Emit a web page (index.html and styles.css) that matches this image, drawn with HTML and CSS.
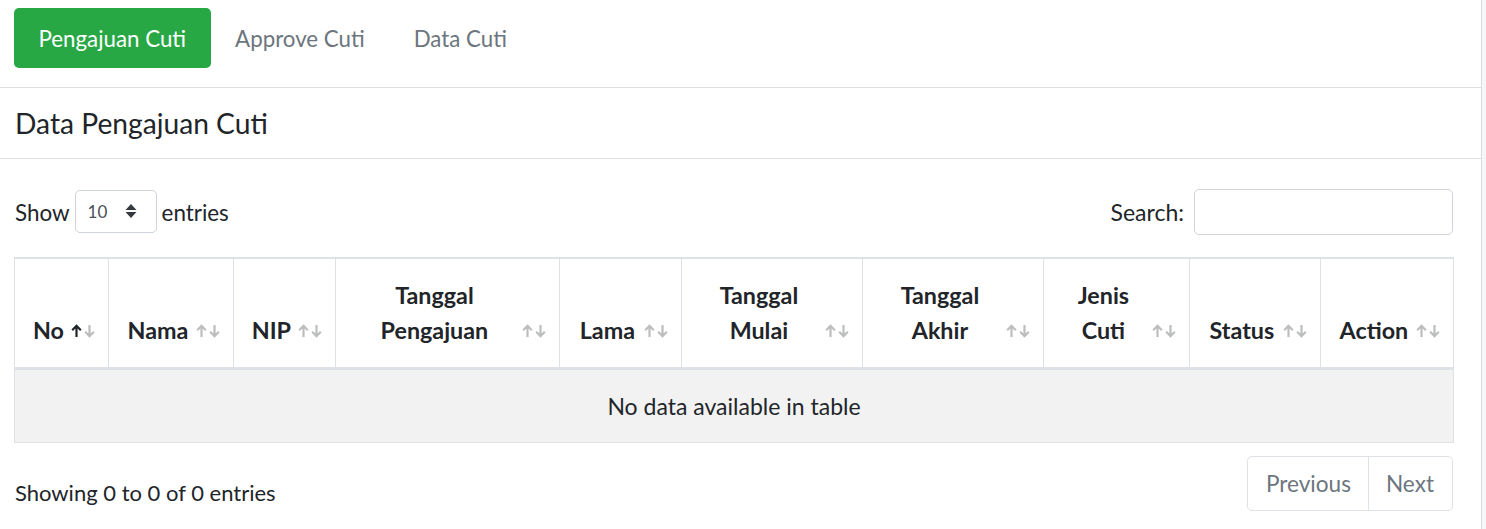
FILE: index.html
```html
<!DOCTYPE html>
<html lang="id">
<head>
<meta charset="utf-8">
<title>Data Pengajuan Cuti</title>
<link rel="stylesheet" href="styles.css">
</head>
<body>
<div class="card">
  <div class="card-header nav-header">
    <ul class="nav">
      <li><a class="pill active">Pengajuan Cuti</a></li>
      <li><a class="pill">Approve Cuti</a></li>
      <li><a class="pill">Data Cuti</a></li>
    </ul>
  </div>
  <div class="card-header title-header">
    <h3 class="card-title">Data Pengajuan Cuti</h3>
  </div>
  <div class="card-body">
    <div class="dt-top">
      <label class="length">Show <span class="select"><span class="select-val">10</span><svg class="caret" width="12" height="16" viewBox="0 0 12 16"><path d="M6 1 L11.5 7 H0.5 Z M6 15 L11.5 9 H0.5 Z" fill="#343a40"/></svg></span> entries</label>
      <label class="search">Search: <span class="input"></span></label>
    </div>
    <table class="dt">
      <colgroup>
        <col class="w-no"><col class="w-nama"><col class="w-nip"><col class="w-tp"><col class="w-lama"><col class="w-tm"><col class="w-ta"><col class="w-jc"><col class="w-st"><col class="w-ac">
      </colgroup>
      <thead>
        <tr>
          <th class="asc">No<svg class="sort-ic" width="25" height="14" viewBox="0 0 25 14"><path class="up" d="M5.5 13 V2 M1.2 6.2 L5.5 1.8 L9.8 6.2"/><path class="down" d="M18.5 1 V12 M14.2 7.8 L18.5 12.2 L22.8 7.8"/></svg></th>
          <th>Nama<svg class="sort-ic" width="25" height="14" viewBox="0 0 25 14"><path class="up" d="M5.5 13 V2 M1.2 6.2 L5.5 1.8 L9.8 6.2"/><path class="down" d="M18.5 1 V12 M14.2 7.8 L18.5 12.2 L22.8 7.8"/></svg></th>
          <th>NIP<svg class="sort-ic" width="25" height="14" viewBox="0 0 25 14"><path class="up" d="M5.5 13 V2 M1.2 6.2 L5.5 1.8 L9.8 6.2"/><path class="down" d="M18.5 1 V12 M14.2 7.8 L18.5 12.2 L22.8 7.8"/></svg></th>
          <th>Tanggal<br>Pengajuan<svg class="sort-ic" width="25" height="14" viewBox="0 0 25 14"><path class="up" d="M5.5 13 V2 M1.2 6.2 L5.5 1.8 L9.8 6.2"/><path class="down" d="M18.5 1 V12 M14.2 7.8 L18.5 12.2 L22.8 7.8"/></svg></th>
          <th>Lama<svg class="sort-ic" width="25" height="14" viewBox="0 0 25 14"><path class="up" d="M5.5 13 V2 M1.2 6.2 L5.5 1.8 L9.8 6.2"/><path class="down" d="M18.5 1 V12 M14.2 7.8 L18.5 12.2 L22.8 7.8"/></svg></th>
          <th>Tanggal<br>Mulai<svg class="sort-ic" width="25" height="14" viewBox="0 0 25 14"><path class="up" d="M5.5 13 V2 M1.2 6.2 L5.5 1.8 L9.8 6.2"/><path class="down" d="M18.5 1 V12 M14.2 7.8 L18.5 12.2 L22.8 7.8"/></svg></th>
          <th>Tanggal<br>Akhir<svg class="sort-ic" width="25" height="14" viewBox="0 0 25 14"><path class="up" d="M5.5 13 V2 M1.2 6.2 L5.5 1.8 L9.8 6.2"/><path class="down" d="M18.5 1 V12 M14.2 7.8 L18.5 12.2 L22.8 7.8"/></svg></th>
          <th>Jenis<br>Cuti<svg class="sort-ic" width="25" height="14" viewBox="0 0 25 14"><path class="up" d="M5.5 13 V2 M1.2 6.2 L5.5 1.8 L9.8 6.2"/><path class="down" d="M18.5 1 V12 M14.2 7.8 L18.5 12.2 L22.8 7.8"/></svg></th>
          <th>Status<svg class="sort-ic" width="25" height="14" viewBox="0 0 25 14"><path class="up" d="M5.5 13 V2 M1.2 6.2 L5.5 1.8 L9.8 6.2"/><path class="down" d="M18.5 1 V12 M14.2 7.8 L18.5 12.2 L22.8 7.8"/></svg></th>
          <th>Action<svg class="sort-ic" width="25" height="14" viewBox="0 0 25 14"><path class="up" d="M5.5 13 V2 M1.2 6.2 L5.5 1.8 L9.8 6.2"/><path class="down" d="M18.5 1 V12 M14.2 7.8 L18.5 12.2 L22.8 7.8"/></svg></th>
        </tr>
      </thead>
      <tbody>
        <tr><td colspan="10" class="empty">No data available in table</td></tr>
      </tbody>
    </table>
    <div class="dt-bottom">
      <div class="info">Showing 0 to 0 of 0 entries</div>
      <ul class="pagination">
        <li class="page prev">Previous</li>
        <li class="page next">Next</li>
      </ul>
    </div>
  </div>
</div>
</body>
</html>
```
FILE: styles.css
```css
html, body {
  margin: 0;
  padding: 0;
}
body {
  background: #f4f6f9;
  font-family: "Lato", "Liberation Sans", sans-serif;
  font-size: 22.4px;
  line-height: 35px;
  color: #212529;
  overflow: hidden;
}
.card {
  width: 1481px;
  height: 529px;
  background: #fff;
  border-right: 1px solid #dcdcdc;
  box-sizing: content-box;
}
.card-header {
  border-bottom: 1px solid #dfdfdf;
}
.nav-header {
  padding: 8px 14px 19px;
}
.nav {
  list-style: none;
  margin: 0;
  padding: 0;
  display: flex;
}
.pill {
  display: block;
  padding: 12.5px 24.5px;
  font-size: 22.3px;
  line-height: 35px;
  color: #6c757d;
  border-radius: 5px;
}
.pill.active {
  background: #28a745;
  color: #fff;
}
.title-header {
  padding: 17.5px 15px;
}
.card-title {
  margin: 0;
  font-size: 28.2px;
  font-weight: 400;
  line-height: 35px;
}
.card-body {
  padding: 30px 28px 0 14px;
}
.dt-top {
  display: flex;
  justify-content: space-between;
  align-items: center;
  height: 46px;
  padding-left: 1px;
}
.length, .search {
  display: flex;
  align-items: center;
  gap: 5px;
}
.select {
  display: flex;
  align-items: center;
  justify-content: space-between;
  box-sizing: border-box;
  width: 82px;
  height: 43px;
  border: 1px solid #ced4da;
  border-radius: 5px;
  padding: 0 19px 0 12px;
  margin-top: -2px;
  font-size: 17px;
  color: #495057;
}
.caret {
  display: block;
}
.search {
  gap: 10px;
  font-size: 23px;
}
.input {
  display: block;
  box-sizing: border-box;
  width: 259px;
  height: 46px;
  border: 1px solid #ced4da;
  border-radius: 5px;
}
.dt {
  margin-top: 22px;
  width: 1439px;
  table-layout: fixed;
  border-collapse: collapse;
  border: 1px solid #dee2e6;
  border-top: 2px solid #dee2e6;
}
.w-no { width: 94px; }
.w-nama { width: 125px; }
.w-nip { width: 102px; }
.w-tp { width: 224px; }
.w-lama { width: 122px; }
.w-tm { width: 181px; }
.w-ta { width: 181px; }
.w-jc { width: 146px; }
.w-st { width: 131px; }
.w-ac { width: 133px; }
.dt th {
  position: relative;
  padding: 19px 43.7px 19px 17.5px;
  font-size: 23.3px;
  line-height: 35px;
  font-weight: 700;
  text-align: center;
  vertical-align: bottom;
  border: 1px solid #dee2e6;
  border-top: 0;
  border-bottom: 3px solid #dee2e6;
  white-space: nowrap;
}
.sort-ic {
  position: absolute;
  right: 12px;
  bottom: 29px;
  display: block;
}
.sort-ic path {
  fill: none;
  stroke: #212529;
  stroke-width: 2.2;
  stroke-opacity: 0.3;
}
.asc .sort-ic .up {
  stroke-opacity: 1;
}
.dt td.empty {
  background: #f2f2f2;
  text-align: center;
  padding: 18.5px 17.5px;
  font-size: 23px;
  line-height: 35px;
  border: 1px solid #dee2e6;
}
.dt-bottom {
  display: flex;
  justify-content: space-between;
  align-items: flex-start;
  margin-top: 13px;
}
.info {
  padding-top: 19px;
  font-size: 22px;
  line-height: 35px;
  padding-left: 1px;
}
.pagination {
  list-style: none;
  margin: 0;
  padding: 0;
  display: flex;
  border: 1px solid #dee2e6;
  border-radius: 5px;
}
.page {
  padding: 12px 17px 12px 18px;
  font-size: 22.6px;
  line-height: 29px;
  color: #6c757d;
}
.page.next {
  padding: 12px 18px 12px 17px;
  border-left: 1px solid #dee2e6;
}
```
